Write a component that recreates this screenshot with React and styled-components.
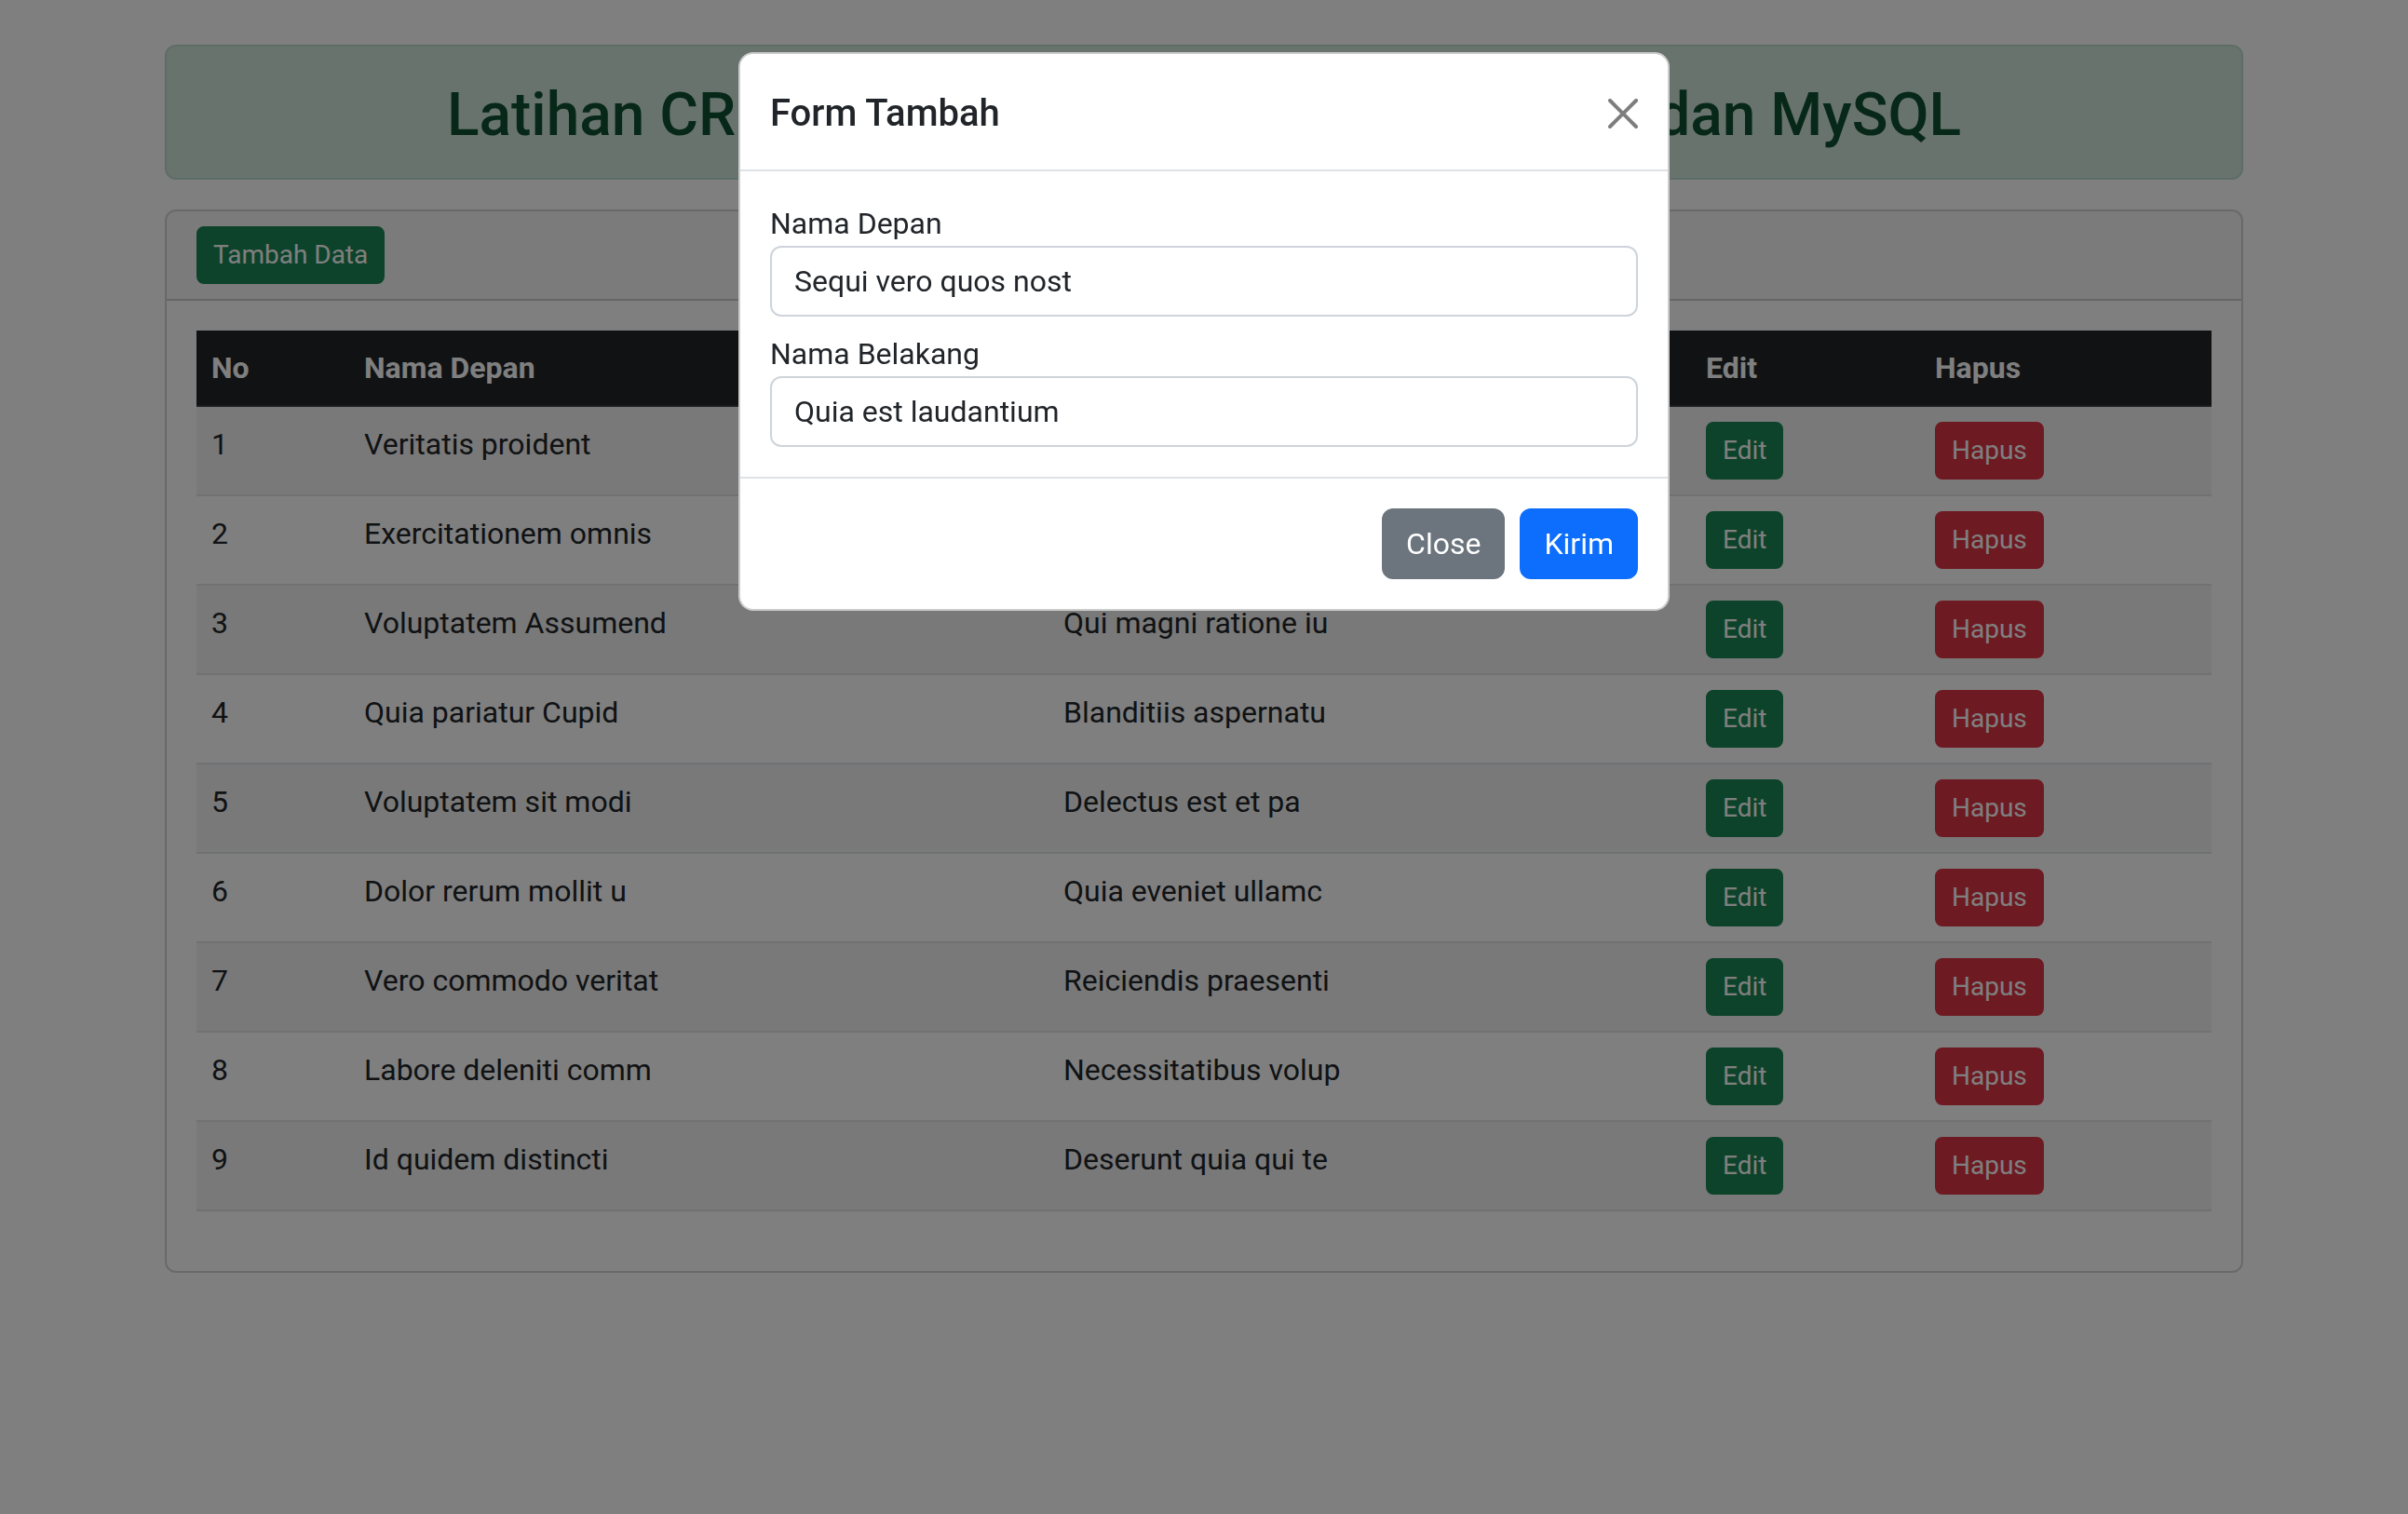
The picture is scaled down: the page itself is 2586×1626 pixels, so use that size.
import React from 'react';
import styled, { createGlobalStyle } from 'styled-components';

const FONT = `Roboto, "Noto Sans", sans-serif`;

const GlobalStyle = createGlobalStyle`
  * { box-sizing: border-box; }
  body {
    margin: 0;
    font-family: ${FONT};
    font-size: 32px;
    line-height: 1.5;
    color: #212529;
    background: #fff;
  }
`;

const rows = [
  ['Veritatis proident', 'Dolorem nulla et'],
  ['Exercitationem omnis', 'Ipsum cum ut'],
  ['Voluptatem Assumend', 'Qui magni ratione iu'],
  ['Quia pariatur Cupid', 'Blanditiis aspernatu'],
  ['Voluptatem sit modi', 'Delectus est et pa'],
  ['Dolor rerum mollit u', 'Quia eveniet ullamc'],
  ['Vero commodo veritat', 'Reiciendis praesenti'],
  ['Labore deleniti comm', 'Necessitatibus volup'],
  ['Id quidem distincti', 'Deserunt quia qui te'],
];

const App = () => {
  return (
    <>
      <GlobalStyle />
      <Container>
        <Alert>
          <Title>Latihan CRUD React JS, Node JS, Express JS dan MySQL</Title>
        </Alert>
        <Card>
          <CardHeader>
            <Button variant="success" small>Tambah Data</Button>
          </CardHeader>
          <CardBody>
            <Table>
              <colgroup>
                <col style={{ width: 164 }} />
                <col style={{ width: 751 }} />
                <col style={{ width: 690 }} />
                <col style={{ width: 246 }} />
                <col />
              </colgroup>
              <thead>
                <tr>
                  <Th>No</Th>
                  <Th>Nama Depan</Th>
                  <Th>Nama Belakang</Th>
                  <Th>Edit</Th>
                  <Th>Hapus</Th>
                </tr>
              </thead>
              <tbody>
                {rows.map((r, i) => (
                  <Tr key={i} striped={i % 2 === 0}>
                    <Td>{i + 1}</Td>
                    <Td>{r[0]}</Td>
                    <Td>{r[1]}</Td>
                    <Td><Button variant="success" small>Edit</Button></Td>
                    <Td><Button variant="danger" small>Hapus</Button></Td>
                  </Tr>
                ))}
              </tbody>
            </Table>
          </CardBody>
        </Card>
      </Container>

      <Backdrop />
      <ModalWrap>
        <Dialog>
          <ModalHeader>
            <ModalTitle>Form Tambah</ModalTitle>
            <CloseBtn aria-label="Close">
              <svg viewBox="0 0 16 16" width="32" height="32">
                <path
                  fill="#000"
                  d="M.293.293a1 1 0 0 1 1.414 0L8 6.586 14.293.293a1 1 0 1 1 1.414 1.414L9.414 8l6.293 6.293a1 1 0 0 1-1.414 1.414L8 9.414l-6.293 6.293a1 1 0 0 1-1.414-1.414L6.586 8 .293 1.707a1 1 0 0 1 0-1.414z"
                />
              </svg>
            </CloseBtn>
          </ModalHeader>
          <ModalBody>
            <Label>Nama Depan</Label>
            <Input defaultValue="Sequi vero quos nost" spaced />
            <Label>Nama Belakang</Label>
            <Input defaultValue="Quia est laudantium" />
          </ModalBody>
          <ModalFooter>
            <Button variant="secondary">Close</Button>
            <Button variant="primary">Kirim</Button>
          </ModalFooter>
        </Dialog>
      </ModalWrap>
    </>
  );
};

const VARIANTS = {
  success: '#198754',
  danger: '#dc3545',
  secondary: '#6c757d',
  primary: '#0d6efd',
};

const Container = styled.div`
  width: 2280px;
  margin: 48px auto 0;
  padding: 0 24px;
`;

const Alert = styled.div`
  padding: 36px 32px 28px;
  margin-bottom: 32px;
  border: 2px solid #badbcc;
  border-radius: 12px;
  background-color: #d1e7dd;
  color: #0f5132;
`;

const Title = styled.h2`
  margin: 0;
  font-size: 64px;
  font-weight: 500;
  line-height: 1.2;
  text-align: center;
  white-space: nowrap;
`;

const Card = styled.div`
  border: 2px solid rgba(0, 0, 0, 0.175);
  border-radius: 12px;
  background: #fff;
  overflow: hidden;
`;

const CardHeader = styled.div`
  display: flex;
  padding: 16px 32px;
  background-color: rgba(0, 0, 0, 0.03);
  border-bottom: 2px solid rgba(0, 0, 0, 0.175);
`;

const CardBody = styled.div`
  padding: 32px;
`;

const Button = styled.button`
  display: inline-block;
  font-family: ${FONT};
  font-weight: 400;
  color: #fff;
  background-color: ${(p) => VARIANTS[p.variant]};
  border: 2px solid ${(p) => VARIANTS[p.variant]};
  padding: ${(p) => (p.small ? '8px 16px' : '12px 24px')};
  font-size: ${(p) => (p.small ? '28px' : '32px')};
  line-height: 1.5;
  border-radius: ${(p) => (p.small ? '8px' : '12px')};
  cursor: pointer;
`;

const Table = styled.table`
  width: 100%;
  table-layout: fixed;
  border-collapse: collapse;
  margin-bottom: 32px;
  vertical-align: top;
`;

const Th = styled.th`
  text-align: left;
  font-weight: 700;
  padding: 16px;
  background-color: #212529;
  color: #fff;
  border-bottom: 2px solid #373b3e;
`;

const Tr = styled.tr`
  background-color: ${(p) => (p.striped ? 'rgba(0, 0, 0, 0.05)' : 'transparent')};
`;

const Td = styled.td`
  padding: 16px;
  border-bottom: 2px solid #dee2e6;
  vertical-align: top;
`;

const Backdrop = styled.div`
  position: fixed;
  inset: 0;
  background-color: rgba(0, 0, 0, 0.5);
  z-index: 1050;
`;

const ModalWrap = styled.div`
  position: fixed;
  inset: 0;
  z-index: 1055;
`;

const Dialog = styled.div`
  width: 1000px;
  margin: 56px auto;
  background: #fff;
  border: 2px solid rgba(0, 0, 0, 0.2);
  border-radius: 16px;
`;

const ModalHeader = styled.div`
  display: flex;
  align-items: center;
  padding: 34px 32px 30px;
  border-bottom: 2px solid #dee2e6;
`;

const ModalTitle = styled.h5`
  margin: 0;
  font-size: 40px;
  font-weight: 500;
  line-height: 1.5;
`;

const CloseBtn = styled.button`
  box-sizing: content-box;
  display: flex;
  width: 32px;
  height: 32px;
  padding: 16px;
  margin: -16px -16px -16px auto;
  background: transparent;
  border: 0;
  border-radius: 12px;
  opacity: 0.5;
  cursor: pointer;
`;

const ModalBody = styled.div`
  padding: 32px;
`;

const Label = styled.label`
  display: block;
  line-height: 48px;
`;

const Input = styled.input`
  display: block;
  width: 100%;
  padding: 12px 24px;
  margin-bottom: ${(p) => (p.spaced ? '16px' : '0')};
  font-family: ${FONT};
  font-size: 32px;
  line-height: 48px;
  color: #212529;
  background: #fff;
  border: 2px solid #ced4da;
  border-radius: 12px;
  outline: none;
`;

const ModalFooter = styled.div`
  display: flex;
  justify-content: flex-end;
  align-items: center;
  padding: 24px;
  border-top: 2px solid #dee2e6;

  & > button {
    margin: 8px;
  }
`;

export default App;
